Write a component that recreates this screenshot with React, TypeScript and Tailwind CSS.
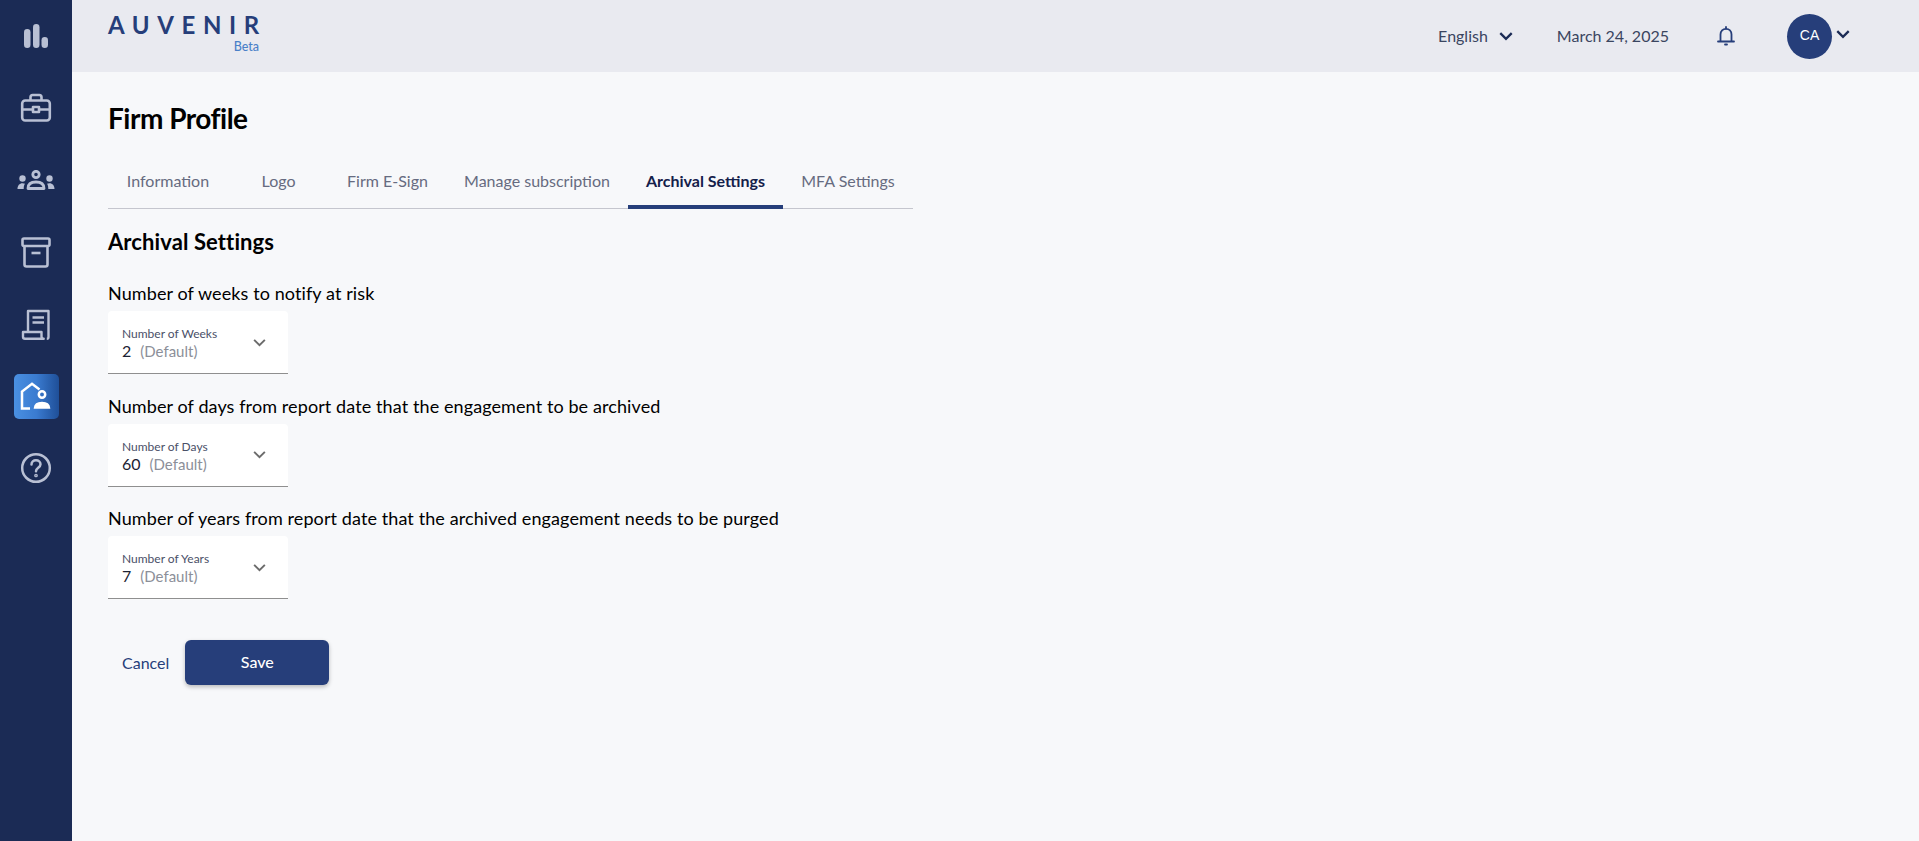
import React from "react";

const iconCls = "text-[#b9c0d4]";

function Bars() {
  return (
    <svg width="24" height="24" viewBox="0 0 24 24" fill="currentColor" className={iconCls}>
      <rect x="0" y="5" width="6.500" height="19" rx="3.250" />
      <rect x="9" y="0" width="6.500" height="24" rx="3.250" />
      <rect x="17.500" y="13" width="6.500" height="11" rx="3.250" />
    </svg>
  );
}

function Briefcase() {
  return (
    <svg width="32" height="30" viewBox="0 0 32 30" fill="none" stroke="currentColor" strokeWidth="2.600" strokeLinejoin="round" className={iconCls}>
      <rect x="2.200" y="7.500" width="27.600" height="20" rx="3" />
      <path d="M10.500 7.500V4.200C10.500 2.800 11.400 2 12.700 2h6.600c1.300 0 2.200.8 2.200 2.200v3.300" />
      <path d="M2.200 16.500H12M20 16.500h9.800" />
      <rect x="13" y="14" width="6" height="5" />
    </svg>
  );
}

function People() {
  return (
    <svg width="38" height="20" viewBox="0 0 38 20" fill="currentColor" className={iconCls}>
      <circle cx="19" cy="4.500" r="3.200" fill="none" stroke="currentColor" strokeWidth="2.800" />
      <path d="M11 18.500c0-4.500 3.200-6.500 8-6.500s8 2 8 6.500z" fill="none" stroke="currentColor" strokeWidth="2.800" strokeLinejoin="round" />
      <circle cx="5.500" cy="8.500" r="3.200" />
      <path d="M0.500 19c0-3.500 2-5.800 5-5.800 1 0 2 .2 2.500 .6-1 1.400-1.300 3-1.300 5.200z" />
      <circle cx="32.500" cy="8.500" r="3.200" />
      <path d="M37.500 19c0-3.500-2-5.800-5-5.800-1 0-2 .2-2.500 .6 1 1.400 1.300 3 1.300 5.200z" />
    </svg>
  );
}

function Archive() {
  return (
    <svg width="30" height="31" viewBox="0 0 30 31" fill="none" stroke="currentColor" strokeWidth="2.600" strokeLinejoin="round" className={iconCls}>
      <rect x="1.500" y="1.500" width="27" height="7.500" rx="1.500" />
      <path d="M3.500 9v18.500c0 1.200.8 2 2 2h19c1.200 0 2-.8 2-2V9" />
      <path d="M10.500 16h9" />
    </svg>
  );
}

function Scroll() {
  return (
    <svg width="30" height="32" viewBox="0 0 30 32" fill="none" stroke="currentColor" strokeWidth="2.400" strokeLinejoin="round" className={iconCls}>
      <path d="M7 24V3h20.500v26c0 1-.7 1.700-1.700 1.700" />
      <path d="M2 24h18.500v4.500c0 1.300.9 2.200 2.200 2.200H4c-1.200 0-2-.8-2-2z" />
      <path d="M11.500 9.500h11.500M11.500 14.500h11.500" />
    </svg>
  );
}

function HomeUser() {
  return (
    <svg width="32" height="28" viewBox="0 0 32 28" fill="none" stroke="white" strokeWidth="2.500">
      <path d="M19.500 7.500L12 1.800 2 9.500v17h8" strokeLinejoin="miter" />
      <circle cx="22" cy="12.500" r="3.200" />
      <path d="M14.500 26c.3-3.500 3.500-5.500 7.500-5.500s7.200 2 7.500 5.500z" fill="white" stroke="white" strokeWidth="1.500" />
    </svg>
  );
}

function Help() {
  return (
    <svg width="32" height="32" viewBox="0 0 32 32" fill="none" stroke="currentColor" strokeWidth="2.500" strokeLinecap="round" className={iconCls}>
      <circle cx="16" cy="16" r="13.800" />
      <path d="M11.500 12.500c0-2.700 2-4.300 4.500-4.300s4.500 1.700 4.500 4c0 3.500-4.500 3.600-4.500 7" />
      <circle cx="16" cy="23.500" r="0.600" fill="currentColor" />
    </svg>
  );
}

function Chevron({ className, size = 14, w = 2 }: { className: string; size?: number; w?: number }) {
  return (
    <svg width={size} height={size} viewBox="0 0 14 14" fill="none" stroke="currentColor" strokeWidth={w} className={className}>
      <path d="M2 4.500l5 5 5-5" />
    </svg>
  );
}

function Bell() {
  return (
    <svg width="18" height="20" viewBox="0 0 18 20" fill="none" stroke="#263e7a" strokeWidth="1.800">
      <path d="M3.500 15V8.500C3.500 5 5.800 2.800 9 2.800s5.500 2.200 5.500 5.700V15" />
      <path d="M1 15.500h16" strokeLinecap="round" />
      <path d="M9 1v1.500M8 18.500h2" strokeLinecap="round" />
    </svg>
  );
}

const navItems = [<Bars />, <Briefcase />, <People />, <Archive />, <Scroll />];

const tabs = [
  { t: "Information", c: "w-[120px]" },
  { t: "Logo", c: "w-[101px]" },
  { t: "Firm E-Sign", c: "w-[117px]" },
  { t: "Manage subscription", c: "w-[182px]" },
  { t: "Archival Settings", c: "w-[155px]", active: true },
  { t: "MFA Settings", c: "w-[130px]" },
];

const fields = [
  { q: "Number of weeks to notify at risk", l: "Number of Weeks", v: "2" },
  { q: "Number of days from report date that the engagement to be archived", l: "Number of Days", v: "60" },
  { q: "Number of years from report date that the archived engagement needs to be purged", l: "Number of Years", v: "7" },
];

export default function App() {
  return (
    <div className="flex h-[841px] overflow-hidden bg-[#f7f8fa] font-['Lato',sans-serif]">
      <aside className="w-[72px] shrink-0 bg-[#1b2b55] flex flex-col">
        {navItems.map((icon, i) => (
          <div key={i} className="h-[72px] flex items-center justify-center">{icon}</div>
        ))}
        <div className="h-[72px] flex items-center justify-center">
          <div className="w-[45px] h-[45px] rounded-[5px] bg-gradient-to-r from-[#4a90e2] via-[#3a7bd0] to-[#1f4f98] flex items-center justify-center">
            <HomeUser />
          </div>
        </div>
        <div className="h-[72px] flex items-center justify-center"><Help /></div>
      </aside>

      <div className="flex-1 flex flex-col">
        <header className="h-[72px] bg-[#e9eaf0] flex items-start shrink-0">
          <div className="ml-9 mt-[11px] w-[154px] flex flex-col">
            <span className="text-[24px] leading-[28px] font-bold text-[#263e7a] tracking-[7.600px] whitespace-nowrap">AUVENIR</span>
            <span className="self-end text-[12.500px] leading-[15px] font-medium text-[#4a80c8] mr-[3px]">Beta</span>
          </div>
          <div className="flex-1" />
          <div className="flex items-center h-[72px] text-[16px] text-[#3a4560]">
            <span>English</span>
            <Chevron className="ml-[10px] text-[#1b2b55]" size={16} w={2} />
            <span className="ml-[43px]">March 24, 2025</span>
            <span className="ml-[48px] flex"><Bell /></span>
            <div className="ml-[52px] w-[45px] h-[45px] pb-[1px] rounded-full bg-[#263e7a] text-white text-[14px] flex items-center justify-center font-medium font-['Liberation_Sans',sans-serif]">CA</div>
            <Chevron className="ml-[3px] mb-[5px] mr-[68px] text-[#1b2b55]" size={16} w={2} />
          </div>
        </header>

        <main className="pl-9 pt-[27px]">
          <h1 className="text-[28px] leading-[38px] font-bold text-black tracking-[-0.5px]">Firm Profile</h1>
          <div className="mt-[17px] flex w-[805px] h-[55px] border-b border-[#c5c6ce]">
            {tabs.map((tab) => (
              <div
                key={tab.t}
                className={
                  tab.active
                    ? `${tab.c} h-[55px] pt-[2px] flex items-center justify-center text-[16px] font-bold text-[#14204a] border-b-4 border-[#263e7a]`
                    : `${tab.c} h-[55px] pb-[2px] flex items-center justify-center text-[16px] text-[#666b80]`
                }
              >
                {tab.t}
              </div>
            ))}
          </div>
          <h2 className="mt-[18px] text-[22px] leading-[30px] font-bold text-black tracking-[0.1px]">Archival Settings</h2>
          <div className="mt-[21px] flex flex-col gap-[16.500px]">
            {fields.map((f) => (
              <div key={f.l} className="flex flex-col">
                <div className="text-[18px] leading-[30px] text-black tracking-[0.1px]">{f.q}</div>
                <div className="mt-[3px] w-[180px] h-[63px] pt-[4px] bg-white rounded-t-[4px] border-b-[1.500px] border-[#8f8f8f] flex items-center pl-[14px] pr-[21px]">
                  <div className="flex-1 flex flex-col">
                    <span className="text-[12px] leading-[14px] text-[#4a5068]">{f.l}</span>
                    <span className="text-[16px] leading-[20px] text-[#1c2233]">
                      {f.v}
                      <span className="ml-[9px] text-[15px] text-[#8c8f99]">(Default)</span>
                    </span>
                  </div>
                  <Chevron className="text-[#6b6b6b] mb-[4px]" size={15} w={1.800} />
                </div>
              </div>
            ))}
          </div>
          <div className="mt-[41px] flex items-center">
            <button className="ml-[14px] text-[16px] text-[#263e7a]">Cancel</button>
            <button className="ml-[16px] w-[144px] h-[45px] pb-[1px] rounded-[6px] bg-[#263e7a] text-white text-[16px] font-medium shadow-[0_2px_4px_rgba(0,0,0,0.25)]">Save</button>
          </div>
        </main>
      </div>
    </div>
  );
}
